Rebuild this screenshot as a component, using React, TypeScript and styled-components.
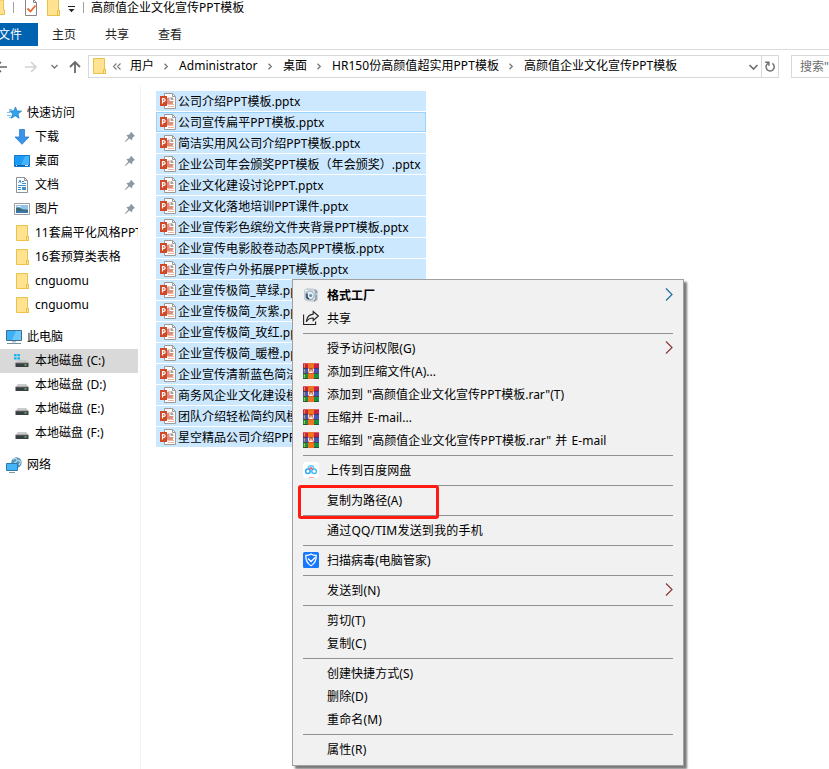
import React from "react";
import styled, { createGlobalStyle, css } from "styled-components";

const GlobalStyle = createGlobalStyle`
  * { box-sizing: border-box; }
  html, body { margin: 0; padding: 0; overflow: hidden; background: #fff; }
  body { font-family: "Noto Sans", "Noto Sans CJK SC", sans-serif; font-size: 12px; line-height: 16px; color: #000; }
  svg { display: block; flex: none; }
`;

const Window = styled.div`
  position: relative;
  width: 829px;
  height: 769px;
  overflow: hidden;
  background: #fff;
  display: flex;
  flex-direction: column;
`;

const TitleBar = styled.header`
  height: 23px;
  display: flex;
  align-items: flex-start;
  white-space: nowrap;
`;

const TitleIcons = styled.div`
  width: 91px;
  flex: none;
`;

const Tabs = styled.nav`
  height: 27px;
  display: flex;
  border-bottom: 1px solid #dadbdc;
`;

const Tab = styled.div<{ $file?: boolean }>`
  width: 53px;
  height: 23px;
  padding-left: 14px;
  line-height: 24px;
  color: #222;
  ${(p) =>
    p.$file &&
    css`
      width: 38px;
      padding-left: 0;
      text-indent: -2px;
      background: #0063b1;
      color: #fff;
    `}
`;

const AddressRow = styled.div`
  height: 35px;
  padding-top: 5px;
  display: flex;
`;

const NavButtons = styled.div`
  width: 88px;
  flex: none;
`;

const AddressBox = styled.div`
  width: 691px;
  height: 23px;
  flex: none;
  border: 1px solid #d9d9d9;
  display: flex;
  align-items: center;
  padding-left: 2px;
`;

const AddressIcon = styled.span`
  padding-bottom: 1px;
`;

const Crumbs = styled.div`
  flex: 1;
  display: flex;
  align-items: center;
  white-space: nowrap;
`;

const Crumb = styled.span<{ $w: number; $tracking?: number }>`
  width: ${(p) => p.$w}px;
  flex: none;
  line-height: 20px;
  padding-bottom: 1px;
  letter-spacing: ${(p) => p.$tracking ?? 0}px;
`;

const CrumbArrow = styled.span<{ $w: number }>`
  width: ${(p) => p.$w}px;
  flex: none;
`;

const Refresh = styled.div`
  width: 17px;
  height: 21px;
  border-left: 1px solid #d9d9d9;
  display: flex;
  align-items: center;
  justify-content: center;
`;

const SearchBox = styled.div`
  margin-left: 12px;
  width: 60px;
  height: 23px;
  flex: none;
  border: 1px solid #d9d9d9;
  padding-left: 8px;
  line-height: 22px;
  color: #6d6d6d;
  white-space: nowrap;
`;

const Main = styled.main`
  flex: 1;
  display: flex;
  min-height: 0;
`;

const Sidebar = styled.aside`
  width: 141px;
  flex: none;
  border-right: 1px solid #f3f3f3;
  padding-top: 16px;
`;

const SideGroup = styled.section`
  margin-bottom: 8px;
`;

const SideRow = styled.div<{ $root?: boolean; $active?: boolean }>`
  width: 138px;
  height: 24px;
  display: flex;
  align-items: center;
  overflow: hidden;
  white-space: nowrap;
  word-spacing: 0.8px;
  padding-left: ${(p) => (p.$root ? 6 : 14)}px;
  background: ${(p) => (p.$active ? "#d9d9d9" : "transparent")};
`;

const SideLabel = styled.span`
  margin-left: 5px;
  flex: 1;
`;

const PinSlot = styled.span`
  width: 14px;
`;

const FileList = styled.div`
  width: 270px;
  margin: 6px 0 0 15px;
  display: flex;
  flex-direction: column;
  gap: 1px;
`;

const FileRow = styled.div<{ $focused?: boolean }>`
  height: 20px;
  background: #cce8ff;
  display: flex;
  align-items: center;
  padding-left: 4px;
  white-space: nowrap;
  box-shadow: ${(p) => (p.$focused ? "inset 0 0 0 1px #99d1ff" : "none")};
`;

const FileName = styled.span`
  margin-left: 2px;
  padding-top: 1px;
  letter-spacing: 0.03px;
`;

const Menu = styled.div`
  position: absolute;
  left: 292px;
  top: 279px;
  width: 392px;
  height: 487px;
  padding: 4px 10px;
  background: #f1f1f1;
  border: 1px solid #a0a0a0;
  box-shadow: 3px 3px 2px rgba(0, 0, 0, 0.52);
`;

const MenuItem = styled.div<{ $bold?: boolean }>`
  height: 23px;
  padding-bottom: 1px;
  display: flex;
  align-items: center;
  white-space: nowrap;
  font-weight: ${(p) => (p.$bold ? 700 : 400)};
`;

const MenuIcon = styled.span`
  width: 24px;
  flex: none;
`;

const MenuLabel = styled.span<{ $tracking?: number }>`
  flex: 1;
  padding-top: 1px;
  word-spacing: 1px;
  letter-spacing: ${(p) => p.$tracking ?? 0.04}px;
`;

const Separator = styled.div`
  height: 7px;
  padding: 3px 0;
  &::before {
    content: "";
    display: block;
    height: 1px;
    background: #919191;
  }
`;

const Highlight = styled.div`
  position: absolute;
  left: 298px;
  top: 485px;
  width: 141px;
  height: 34px;
  border: 3px solid #ff1a12;
  border-radius: 3px;
`;

const FolderIcon = () => (
  <svg width="16" height="16" viewBox="0 0 16 16">
    <path d="M2.500.500h11v11h1v4h-12z" fill="#ffe391" stroke="#e9c14c" />
    <path d="M12.500 15.500v-4h2v4z" fill="#ffe9a0" stroke="#e9bd3e" />
  </svg>
);

const StarIcon = () => (
  <svg width="16" height="16" viewBox="0 0 16 16">
    <path d="M9.500 2l1.500 4 4.500.100-3.600 2.700 1.200 4.400-3.900-2.500-3.900 2.500 1.400-4.400L3.500 6l4.400-.2z" fill="#35a2ea" stroke="#1685cf" strokeWidth=".8" />
    <path d="M3 4.500h3M1 7.500h3M1 10.500h4M3 12.500h2" stroke="#69b9ec" strokeWidth=".9" />
  </svg>
);

const DownloadIcon = () => (
  <svg width="16" height="16" viewBox="0 0 16 16">
    <path d="M5.500.500h5v7.500h4.500L8 15.300 1 8h4.500z" fill="#3b94e8" stroke="#2a7fd2" strokeWidth=".8" />
  </svg>
);

const DesktopIcon = () => (
  <svg width="16" height="16" viewBox="0 0 16 16">
    <path d="M.5 2.500h15v11H.5z" fill="#1a9bf5" stroke="#1478c8" />
    <path d="M11 3h4v9H7z" fill="#45b2fb" />
    <path d="M1 12.500h14" stroke="#0b5fa8" />
    <path d="M2 12.500h1M11 12.500h3" stroke="#d5ecff" />
  </svg>
);

const DocIcon = () => (
  <svg width="16" height="16" viewBox="0 0 16 16">
    <path d="M2.500.500h8l3 3v12h-11z" fill="#fff" stroke="#8a939b" />
    <path d="M10.500.500v3h3" fill="none" stroke="#8a939b" />
    <path d="M4.500 6L6 3l1 3M8 4.500h2M8 6.500h4M4 8.500h8M4 10.500h3M8.500 10.500h3.500M4 12.500h3" stroke="#3a92d6" fill="none" />
    <path d="M8 10h4v3H8z" fill="#4b8fc2" />
  </svg>
);

const PictureIcon = () => (
  <svg width="16" height="16" viewBox="0 0 16 16">
    <path d="M.5 2.500h15v11H.5z" fill="#fff" stroke="#9b9b9b" />
    <path d="M2 4h12v8H2z" fill="#8fc3ee" />
    <path d="M2 7c3-1 4 0 6 1 2 1 4 0 6 1v3H2z" fill="#3c6c74" />
    <path d="M2 10.500c4-1 8-1 12 0V12H2z" fill="#3b76b4" />
    <path d="M3 5.500h4" stroke="#e8f5ff" />
  </svg>
);

const PcIcon = () => (
  <svg width="16" height="16" viewBox="0 0 16 16">
    <path d="M.5 1.500h15v10H.5z" fill="#3db0f7" stroke="#3c7196" />
    <path d="M10 2h5v9H6z" fill="#6cc8fb" />
    <path d="M6 12h4v1.500H6z" fill="#b8c2c8" />
    <path d="M1 14.500h14" stroke="#78909e" />
  </svg>
);

const DriveIcon = ({ system }: { system?: boolean }) => (
  <svg width="16" height="16" viewBox="0 0 16 16">
    {system ? (
      <path d="M0 1h2.600v2.300H0zM3.400 1H6v2.300H3.400zM0 4.200h2.600v2.300H0zM3.400 4.200H6v2.300H3.400z" fill="#14b4ee" />
    ) : null}
    <path d="M3.500 7h9l2 3.500h-13z" fill="#c9cbcd" />
    <path d="M1.500 10h13v4h-13z" fill="#3b3e40" />
    <path d="M1.500 10h13" stroke="#777a7c" strokeWidth=".8" />
    <path d="M10.500 12h2" stroke="#55ef55" strokeWidth="1.200" />
  </svg>
);

const NetworkIcon = () => (
  <svg width="16" height="16" viewBox="0 0 16 16">
    <circle cx="10.500" cy="5.500" r="5.200" fill="#5798bd" />
    <path d="M7 2.500c2-2 4-1 4 1S8 5 8 7M12 3l3 2-2 3" stroke="#b8dbe9" strokeWidth="1.300" fill="none" />
    <path d="M.5 6.500h11v7H.5z" fill="#43b5f8" stroke="#2d79a8" />
    <path d="M3 15.500h6" stroke="#869da9" />
  </svg>
);

const PinIcon = () => (
  <svg width="12" height="12" viewBox="0 0 12 12">
    <path d="M7 .8L11 5 9.800 5.600 8.300 7 8 9.500 5.500 7.600 1.200 11 .8 10.600 4.300 6.400 2.200 4l2.800-.3L6.500 2z" fill="#8b98a5" />
  </svg>
);

const PptIcon = () => (
  <svg width="16" height="16" viewBox="0 0 16 16">
    <path d="M4.500.500h8l3 3v12h-11z" fill="#fff" stroke="#9a9a9a" />
    <path d="M12.500.500v3h3" fill="none" stroke="#9a9a9a" />
    <path d="M9.500 4v4h4A3.800 3.800 0 1 1 8.500 4.500z" fill="#dc8f7c" />
    <path d="M10.500 4v3h3a3 3 0 0 0-3-3z" fill="#a9a09c" />
    <path d="M8 11.500h6M8 13.500h6" stroke="#f0b59f" />
    <path d="M0 3h7v10H0z" fill="#d24726" />
    <path d="M2.500 10.500V5.700h1.300a1.300 1.300 0 0 1 0 2.700H2.500" fill="none" stroke="#fff" strokeWidth="1.200" />
  </svg>
);

const RarIcon = () => (
  <svg width="16" height="16" viewBox="0 0 16 16">
    <path d="M0 0h16v5H0z" fill="#cc2040" />
    <path d="M0 5h16v5.500H0z" fill="#4654b8" />
    <path d="M0 10.500h16V16H0z" fill="#17913f" />
    <path d="M0 .5h16" stroke="#dd5a70" />
    <path d="M0 5.300h16M0 10.500h16M0 15.700h16" stroke="#3d2635" strokeWidth=".7" />
    <path d="M1.500 1.500v3M1.500 6.500v3M1.500 11.700v3" stroke="#f4ce22" strokeWidth="1.100" strokeDasharray="1.300 .6" />
    <path d="M5 0h6v16H5z" fill="#ee7420" />
    <path d="M5 5h6v5.500H5z" fill="#c4441f" />
    <path d="M5.700 5.500v2.700c0 1.500 2.300 1.500 2.300 0V6.500v1.700c0 1.500 2.300 1.500 2.300 0V5.500" fill="none" stroke="#fff" strokeWidth="1.100" />
  </svg>
);

const FactoryIcon = () => (
  <svg width="16" height="16" viewBox="0 0 16 16">
    <path d="M1 3l3-2 9 1 2 2v9l-3 2-9-1-2-2z" fill="#c3ced7" />
    <path d="M2 3.500l9 1v9" fill="none" stroke="#eef4f8" strokeWidth="1.300" />
    <circle cx="7" cy="8.300" r="4.300" fill="#e4ecf1" stroke="#8496a5" strokeWidth=".9" />
    <path d="M4 6.500v4l2 1.500" stroke="#243b50" strokeWidth="1.500" fill="none" />
    <circle cx="7.700" cy="8.500" r="1.500" fill="#5f93ba" />
    <path d="M11.500 3.500l2 1-1 2M13 8v4l-2 2" fill="none" stroke="#7f8f9c" strokeWidth="1.200" />
  </svg>
);

const ShareIcon = () => (
  <svg width="16" height="16" viewBox="0 0 16 16" fill="none" stroke="#222" strokeWidth="1.100">
    <path d="M.6 4.500v10h12v-3" />
    <path d="M10.200 1.500l5.200 4.500-5.200 4.500V8C7 8 5 9 3.300 11.700 3.800 7.300 6 4.500 10.200 4.100z" />
  </svg>
);

const BaiduIcon = () => (
  <svg width="16" height="16" viewBox="0 0 16 16" fill="none">
    <rect width="16" height="16" rx="3" fill="#fff" />
    <path d="M5.300 6.500a2.700 2.700 0 1 1 5.400 0" stroke="#58cfff" strokeWidth="1.500" />
    <circle cx="4.900" cy="9.200" r="2.300" stroke="#28a8f5" strokeWidth="1.500" />
    <circle cx="11.100" cy="9.200" r="2.300" stroke="#42bdf8" strokeWidth="1.500" />
    <path d="M6.200 7.500L8 5.700l1.800 1.800" stroke="#f05a6d" strokeWidth="1.500" />
    <path d="M5.500 15.500h5.500" stroke="#f49a9a" strokeWidth=".8" />
  </svg>
);

const GuardIcon = () => (
  <svg width="16" height="16" viewBox="0 0 16 16" fill="none">
    <rect width="16" height="16" rx="1.500" fill="#1677ff" />
    <path d="M8 2c1.500 1 3 1.400 5.200 1.400C13.400 8 12 11.500 8 13.700 4 11.500 2.600 8 2.800 3.400 5 3.400 6.500 3 8 2z" stroke="#fff" strokeWidth="1.300" />
    <path d="M5 6.500l3 3 4.500-4.300" stroke="#fff" strokeWidth="1.300" />
  </svg>
);

const SubArrow = ({ color }: { color: string }) => (
  <svg width="8" height="14" viewBox="0 0 8 14" fill="none">
    <path d="M1 .5l6 6-6 6" stroke={color} strokeWidth="1.200" />
  </svg>
);

const SmallArrow = () => (
  <svg width="6" height="9" viewBox="0 0 6 9" fill="none">
    <path d="M1.500 1.700L4.300 4.500 1.500 7.300" stroke="#777" strokeWidth="1.300" />
  </svg>
);

type SideEntry = { label: string; icon: React.ReactNode; root?: boolean; pin?: boolean; active?: boolean };

const sideGroups: SideEntry[][] = [
  [
    { label: "快速访问", icon: <StarIcon />, root: true },
    { label: "下载", icon: <DownloadIcon />, pin: true },
    { label: "桌面", icon: <DesktopIcon />, pin: true },
    { label: "文档", icon: <DocIcon />, pin: true },
    { label: "图片", icon: <PictureIcon />, pin: true },
    { label: "11套扁平化风格PPT", icon: <FolderIcon /> },
    { label: "16套预算类表格", icon: <FolderIcon /> },
    { label: "cnguomu", icon: <FolderIcon /> },
    { label: "cnguomu", icon: <FolderIcon /> },
  ],
  [
    { label: "此电脑", icon: <PcIcon />, root: true },
    { label: "本地磁盘 (C:)", icon: <DriveIcon system />, active: true },
    { label: "本地磁盘 (D:)", icon: <DriveIcon /> },
    { label: "本地磁盘 (E:)", icon: <DriveIcon /> },
    { label: "本地磁盘 (F:)", icon: <DriveIcon /> },
  ],
  [{ label: "网络", icon: <NetworkIcon />, root: true }],
];

const files = [
  "公司介绍PPT模板.pptx",
  "公司宣传扁平PPT模板.pptx",
  "简洁实用风公司介绍PPT模板.pptx",
  "企业公司年会颁奖PPT模板（年会颁奖）.pptx",
  "企业文化建设讨论PPT.pptx",
  "企业文化落地培训PPT课件.pptx",
  "企业宣传彩色缤纷文件夹背景PPT模板.pptx",
  "企业宣传电影胶卷动态风PPT模板.pptx",
  "企业宣传户外拓展PPT模板.pptx",
  "企业宣传极简_草绿.pptx",
  "企业宣传极简_灰紫.pptx",
  "企业宣传极简_玫红.pptx",
  "企业宣传极简_暖橙.pptx",
  "企业宣传清新蓝色简洁",
  "商务风企业文化建设模",
  "团队介绍轻松简约风模",
  "星空精品公司介绍PPP",
];

type MenuEntry = { label: string; icon?: React.ReactNode; bold?: boolean; arrow?: string; tracking?: number };

const menuGroups: MenuEntry[][] = [
  [
    { label: "格式工厂", icon: <FactoryIcon />, bold: true, arrow: "#1f6f9c" },
    { label: "共享", icon: <ShareIcon /> },
  ],
  [
    { label: "授予访问权限(G)", arrow: "#8b3838" },
    { label: "添加到压缩文件(A)...", icon: <RarIcon /> },
    { label: '添加到 "高颜值企业文化宣传PPT模板.rar"(T)', icon: <RarIcon />, tracking: 0 },
    { label: "压缩并 E-mail...", icon: <RarIcon /> },
    { label: '压缩到 "高颜值企业文化宣传PPT模板.rar" 并 E-mail', icon: <RarIcon /> },
  ],
  [{ label: "上传到百度网盘", icon: <BaiduIcon /> }],
  [{ label: "复制为路径(A)" }],
  [{ label: "通过QQ/TIM发送到我的手机", tracking: 0.2 }],
  [{ label: "扫描病毒(电脑管家)", icon: <GuardIcon /> }],
  [{ label: "发送到(N)", arrow: "#8b3838", tracking: 0.15 }],
  [{ label: "剪切(T)", tracking: 0.15 }, { label: "复制(C)", tracking: 0.15 }],
  [{ label: "创建快捷方式(S)" }, { label: "删除(D)", tracking: 0.15 }, { label: "重命名(M)", tracking: 0.15 }],
  [{ label: "属性(R)", tracking: 0.15 }],
];

export default function App() {
  return (
    <>
      <GlobalStyle />
      <Window>
        <TitleBar>
          <TitleIcons>
            <svg width="91" height="18" viewBox="0 0 91 18" fill="none">
              <path d="M-5 0h8.500v10H4.500v4.500H-5z" fill="#ffe391" stroke="#e9c14c" />
              <path d="M13.500 2v11M83.500 2v11" stroke="#a0a0a0" />
              <path d="M25.500-.5h8l3 3v13h-11z" fill="#fff" stroke="#858585" />
              <path d="M33.500 0v2.500h3" stroke="#858585" />
              <path d="M27.500 8.500l3 3 5-6" stroke="#ee6532" strokeWidth="1.800" />
              <path d="M47.500-.5h11v11h1v5h-12z" fill="#ffe391" stroke="#e9c14c" />
              <path d="M57.500 15.500v-5h2v5z" fill="#ffe9a0" stroke="#e9bd3e" />
              <path d="M68 6.500h7" stroke="#222" />
              <path d="M68.500 9h6l-3 3.200z" fill="#222" />
            </svg>
          </TitleIcons>
          高颜值企业文化宣传PPT模板
        </TitleBar>
        <Tabs>
          <Tab $file>文件</Tab>
          <Tab>主页</Tab>
          <Tab>共享</Tab>
          <Tab>查看</Tab>
        </Tabs>
        <AddressRow>
          <NavButtons>
            <svg width="88" height="23" viewBox="0 0 88 23" fill="none">
              <path d="M7 12H-4M1 7l-5 5 5 5" stroke="#666" strokeWidth="1.600" />
              <path d="M25 12h11M31 7l5 5-5 5" stroke="#d2d2d2" strokeWidth="1.600" />
              <path d="M51.500 10l3 3 3-3" stroke="#777" strokeWidth="1.400" />
              <path d="M75 18V7M70 12l5-5 5 5" stroke="#6a6a6a" strokeWidth="1.800" />
            </svg>
          </NavButtons>
          <AddressBox>
            <AddressIcon><FolderIcon /></AddressIcon>
            <Crumbs>
              <CrumbArrow $w={23}>
                <svg width="22" height="9" viewBox="0 0 22 9" fill="none">
                  <path d="M9.500 1.500l-3 3 3 3M13.500 1.500l-3 3 3 3" stroke="#777" strokeWidth="1.100" />
                </svg>
              </CrumbArrow>
              <Crumb $w={33}>用户</Crumb>
              <CrumbArrow $w={16}><SmallArrow /></CrumbArrow>
              <Crumb $w={88} $tracking={0.05}>Administrator</Crumb>
              <CrumbArrow $w={16}><SmallArrow /></CrumbArrow>
              <Crumb $w={33}>桌面</Crumb>
              <CrumbArrow $w={16}><SmallArrow /></CrumbArrow>
              <Crumb $w={176} $tracking={0.05}>HR150份高颜值超实用PPT模板</Crumb>
              <CrumbArrow $w={16}><SmallArrow /></CrumbArrow>
              <Crumb $w={170}>高颜值企业文化宣传PPT模板</Crumb>
            </Crumbs>
            <svg width="16" height="11" viewBox="0 0 16 11" fill="none">
              <path d="M4.500 4l4 4 4-4" stroke="#707070" strokeWidth="1.700" />
            </svg>
            <Refresh>
              <svg width="12" height="13" viewBox="0 0 12 13" fill="none">
                <path d="M8.300 3.300A4.100 4.100 0 1 1 4 3.300M1.200 2.200h3.700v3.600" stroke="#707070" strokeWidth="1.500" />
              </svg>
            </Refresh>
          </AddressBox>
          <SearchBox>搜索"</SearchBox>
        </AddressRow>
        <Main>
          <Sidebar>
            {sideGroups.map((group, g) => (
              <SideGroup key={g}>
                {group.map((row, i) => (
                  <SideRow key={i} $root={row.root} $active={row.active}>
                    {row.icon}
                    <SideLabel>{row.label}</SideLabel>
                    {row.pin ? <PinSlot><PinIcon /></PinSlot> : null}
                  </SideRow>
                ))}
              </SideGroup>
            ))}
          </Sidebar>
          <FileList>
            {files.map((name, i) => (
              <FileRow key={name} $focused={i === 1}>
                <PptIcon />
                <FileName>{name}</FileName>
              </FileRow>
            ))}
          </FileList>
        </Main>
        <Menu>
          {menuGroups.map((group, g) => (
            <React.Fragment key={g}>
              {g > 0 ? <Separator /> : null}
              {group.map((item) => (
                <MenuItem key={item.label} $bold={item.bold}>
                  <MenuIcon>{item.icon}</MenuIcon>
                  <MenuLabel $tracking={item.tracking}>{item.label}</MenuLabel>
                  {item.arrow ? <SubArrow color={item.arrow} /> : null}
                </MenuItem>
              ))}
            </React.Fragment>
          ))}
        </Menu>
        <Highlight />
      </Window>
    </>
  );
}
